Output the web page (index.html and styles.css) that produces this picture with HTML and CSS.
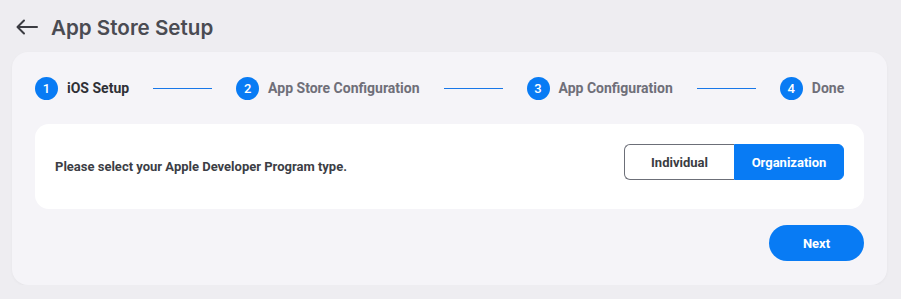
FILE: index.html
```html
<!DOCTYPE html>
<html lang="en">
<head>
  <meta charset="UTF-8">
  <title>App Store Setup</title>
  <link rel="stylesheet" href="styles.css">
</head>
<body>

  <header class="page-head">
    <button class="back-btn" aria-label="Back">
      <svg width="22" height="16" viewBox="0 0 22 16" fill="none" stroke="#3b3c42" stroke-width="2" stroke-linecap="round" stroke-linejoin="round">
        <path d="M21 8H2"/>
        <path d="M8 1.5L1.5 8L8 14.5"/>
      </svg>
    </button>
    <h1>App Store Setup</h1>
  </header>

  <div class="card">
    <div class="stepper">
      <div class="step active"><span class="num">1</span><span class="label">iOS Setup</span></div>
      <span class="line"></span>
      <div class="step"><span class="num">2</span><span class="label">App Store Configuration</span></div>
      <span class="line"></span>
      <div class="step"><span class="num">3</span><span class="label">App Configuration</span></div>
      <span class="line"></span>
      <div class="step"><span class="num">4</span><span class="label">Done</span></div>
    </div>

    <div class="panel">
      <p class="question">Please select your Apple Developer Program type.</p>
      <div class="toggle">
        <button class="opt">Individual</button>
        <button class="opt selected">Organization</button>
      </div>
    </div>

    <div class="actions">
      <button class="next-btn">Next</button>
    </div>
  </div>

</body>
</html>
```

FILE: styles.css
```css
body {
  margin: 0;
  padding: 0 14px 0 12px;
  background: #eeedf1;
  font-family: Roboto, "Liberation Sans", sans-serif;
  color: #3b3d44;
}

.page-head {
  display: flex;
  align-items: center;
  height: 54px;
  padding-left: 4px;
  margin-bottom: -2px;
}
.back-btn {
  display: flex;
  align-items: center;
  background: none;
  border: none;
  padding: 0;
  margin-right: 13px;
  cursor: pointer;
}
.page-head h1 {
  margin: 0;
  font-family: Inter, "Open Sans", sans-serif;
  font-size: 20.6px;
  font-weight: 600;
  color: #4a4b52;
}

.card {
  background: #f5f4f8;
  border-radius: 16px;
  padding: 24px 23px;
  box-shadow: 0 1px 3px rgba(0, 0, 0, 0.04);
}

.stepper {
  display: flex;
  align-items: center;
  gap: 24px;
  height: 24px;
}
.step {
  display: flex;
  align-items: center;
  gap: 9px;
}
.num {
  width: 23px;
  height: 23px;
  border-radius: 50%;
  background: #087bf4;
  color: #fff;
  font-size: 13px;
  font-weight: 500;
  display: flex;
  align-items: center;
  justify-content: center;
}
.label {
  font-size: 14px;
  font-weight: 700;
  color: #6f6f79;
}
.step.active .label {
  color: #2f3036;
}
.line {
  width: 59px;
  height: 1px;
  background: #1877e8;
}

.panel {
  margin-top: 24px;
  background: #fff;
  border-radius: 14px;
  padding: 20px 20px 29px 20px;
  display: flex;
  align-items: center;
  justify-content: space-between;
}
.question {
  margin: 8px 0 0;
  font-size: 13px;
  font-weight: 700;
  color: #3c3e45;
}

.toggle {
  display: flex;
  height: 36px;
}
.opt {
  width: 110px;
  border: 1px solid #6c6f78;
  border-right: none;
  border-radius: 6px 0 0 6px;
  background: #fff;
  font-family: Roboto, "Liberation Sans", sans-serif;
  font-size: 13px;
  font-weight: 700;
  color: #3a3c42;
  cursor: pointer;
}
.opt.selected {
  background: #087bf4;
  border: 1px solid #087bf4;
  border-radius: 0 6px 6px 0;
  color: #fff;
}

.actions {
  display: flex;
  justify-content: flex-end;
  margin-top: 16px;
}
.next-btn {
  width: 95px;
  height: 36px;
  border: none;
  border-radius: 18px;
  background: #087bf4;
  color: #fff;
  font-family: Roboto, "Liberation Sans", sans-serif;
  font-size: 13px;
  font-weight: 700;
  cursor: pointer;
}
```
